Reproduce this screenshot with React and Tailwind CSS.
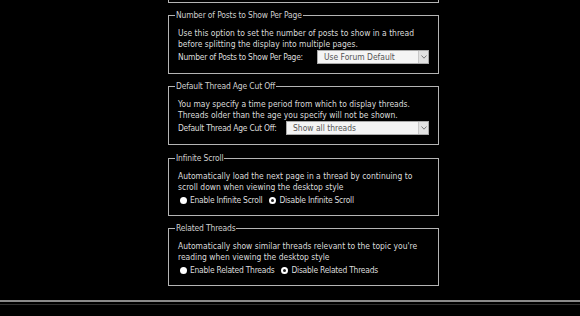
const SelectBox = ({ value, width }) => (
  <div className={`ml-auto flex h-[14px] shrink-0 items-stretch border border-[#a9a9a9] bg-[#f4f4f4] ${width}`}>
    <div className="flex-1 whitespace-nowrap pl-[6px] leading-[12px] text-[#555]">{value}</div>
    <div className="flex w-[10px] items-center justify-center border-l border-[#c8c8c8] bg-[#e2e2e2]">
      <svg width="6" height="4" viewBox="0 0 6 4">
        <path d="M0.5 0.5 L3 3.2 L5.5 0.5" fill="none" stroke="#777" strokeWidth="1" />
      </svg>
    </div>
  </div>
);

const Radio = ({ checked, label }) => (
  <label className="flex items-center gap-[3px] whitespace-nowrap">
    {checked ? (
      <span className="h-[7px] w-[7px] rounded-full border-[2px] border-white bg-[#222]" />
    ) : (
      <span className="h-[7px] w-[7px] rounded-full bg-white" />
    )}
    <span className="tracking-[-0.25px]">{label}</span>
  </label>
);

const Box = ({ legend, gap, children }) => (
  <fieldset className={`${gap} w-full min-w-0 border border-[#b4b4b4] px-[9px] pb-[9px] pt-[7px]`}>
    <legend className="-ml-[3px] px-[1px] leading-[12px] tracking-[-0.15px] text-[#cfcfcf]">{legend}</legend>
    {children}
  </fieldset>
);

const App = () => {
  return (
    <div
      className="h-[316px] w-[580px] overflow-hidden bg-black text-[8.45px] text-[#dcdcdc]"
      style={{ fontFamily: '"DejaVu Sans Condensed", "Liberation Sans", sans-serif', fontStretch: 'condensed' }}
    >
      <div className="w-[439px] pl-[168px]">
        <div className="h-[3px] border-x border-b border-[#b4b4b4]" />

        <Box gap="mt-[6px]" legend="Number of Posts to Show Per Page">
          <p className="leading-[11px]">
            Use this option to set the number of posts to show in a thread before splitting the display into multiple pages.
          </p>
          <div className="flex items-center gap-[4px] whitespace-nowrap">
            <span className="tracking-[-0.25px]">Number of Posts to Show Per Page:</span>
            <SelectBox value="Use Forum Default" width="w-[112px]" />
          </div>
        </Box>

        <Box gap="mt-[6px]" legend="Default Thread Age Cut Off">
          <p className="leading-[11px]">
            You may specify a time period from which to display threads. Threads older than the age you specify will not be shown.
          </p>
          <div className="flex items-center gap-[4px] whitespace-nowrap">
            <span className="tracking-[-0.25px]">Default Thread Age Cut Off:</span>
            <SelectBox value="Show all threads" width="w-[143px]" />
          </div>
        </Box>

        <Box gap="mt-[7px]" legend="Infinite Scroll">
          <p className="leading-[11px]">
            Automatically load the next page in a thread by continuing to scroll down when viewing the desktop style
          </p>
          <div className="mt-[1px] flex items-center gap-[7px] pl-[2px] leading-[12px]">
            <Radio label="Enable Infinite Scroll" />
            <Radio checked label="Disable Infinite Scroll" />
          </div>
        </Box>

        <Box gap="mt-[6px]" legend="Related Threads">
          <p className="leading-[11px]">
            Automatically show similar threads relevant to the topic you're reading when viewing the desktop style
          </p>
          <div className="mt-[1px] flex items-center gap-[7px] pl-[2px] leading-[12px]">
            <Radio label="Enable Related Threads" />
            <Radio checked label="Disable Related Threads" />
          </div>
        </Box>
      </div>

      <div className="mt-[14px] h-[2px] bg-[#8a8a8a]" />
      <div className="mt-[2px] h-[1px] bg-[#2e2e2e]" />
    </div>
  );
};

export default App;
